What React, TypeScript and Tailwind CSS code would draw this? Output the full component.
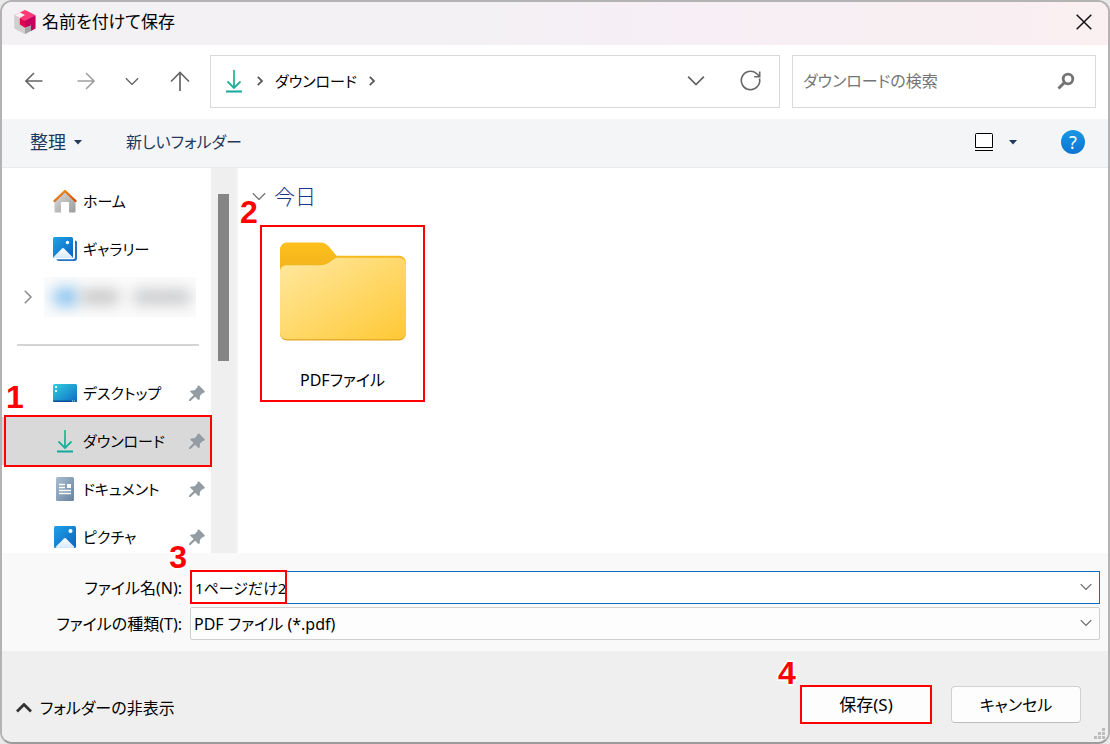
import { useState } from 'react';
import type { ReactNode } from 'react';

interface SidebarItemProps {
  icon: ReactNode;
  label: string;
  pinned?: boolean;
  selected?: boolean;
}

function AppLogo() {
  return (
    <svg width="22" height="24" viewBox="0 0 22 24" aria-hidden="true">
      <path d="M11 0 21.5 5.3V18.6L11 24 .5 18.6V5.3Z" fill="#cfcfcf" />
      <path d="M.5 5.3 11 10.5V24L.5 18.6Z" fill="#cdd0cf" />
      <path d="M11 0 21.5 5.3 11 10.6.5 5.3Z" fill="#ff3a74" />
      <path d="M.5 5.3 6 2.5 11 5 5.8 8Z" fill="#f4f4f4" />
      <path d="M21.5 5.3V18.6L17 21V15.4L11 17.8V10.6Z" fill="#c4005c" />
      <path d="M5.8 8 11 10.6V17.8L5.8 14.6Z" fill="#e5004a" />
      <path d="M11 17.8 17 15.4V21L11 24Z" fill="#a3a3a3" />
    </svg>
  );
}

function DownloadIcon() {
  return (
    <svg width="18" height="24" viewBox="0 0 18 24" fill="none" aria-hidden="true">
      <defs>
        <linearGradient id="dl" x1="0" y1="0" x2="0" y2="24" gradientUnits="userSpaceOnUse">
          <stop stopColor="#2fc08a" />
          <stop offset="1" stopColor="#13a8a0" />
        </linearGradient>
      </defs>
      <path d="M9 1v18M2.5 12.5 9 19l6.500-6.500M1 22.500h16" stroke="url(#dl)" strokeWidth="1.800" />
    </svg>
  );
}

function HomeIcon() {
  return (
    <svg width="24" height="24" viewBox="0 0 24 24" aria-hidden="true">
      <defs>
        <linearGradient id="wall" x1="0" y1="0" x2="1" y2="1">
          <stop stopColor="#dedede" />
          <stop offset="1" stopColor="#9b9b9b" />
        </linearGradient>
        <linearGradient id="roof" x1="0" y1="0" x2="1" y2="1">
          <stop stopColor="#f09a1a" />
          <stop offset="1" stopColor="#d8480c" />
        </linearGradient>
      </defs>
      <path d="M1.500 11 12 2l10.500 9v11.500a1 1 0 0 1-1 1H16V14a1 1 0 0 0-1-1H9a1 1 0 0 0-1 1v9.500H2.500a1 1 0 0 1-1-1Z" fill="url(#wall)" />
      <path d="M1.500 12 12 2l10.500 10" fill="none" stroke="url(#roof)" strokeWidth="2.400" strokeLinecap="round" strokeLinejoin="round" />
    </svg>
  );
}

function PictureIcon({ stacked = false }: { stacked?: boolean }) {
  return (
    <svg width="24" height="24" viewBox="0 0 24 24" aria-hidden="true">
      <defs>
        <linearGradient id="sky" x1="0" y1="0" x2="1" y2="1">
          <stop stopColor="#1fa2e8" />
          <stop offset="1" stopColor="#0b62bd" />
        </linearGradient>
        <linearGradient id="hill" x1="0" y1="0" x2="0" y2="1">
          <stop stopColor="#ffffff" />
          <stop offset="1" stopColor="#d5e9fa" />
        </linearGradient>
      </defs>
      {stacked ? (
        <>
          <path d="M22 3.500c1.300 0 2 .7 2 2v16c0 1.500-1 2.500-2.500 2.500H6c-1.500 0-2.500-.7-2.500-1.700H20c1.200 0 2-.8 2-2Z" fill="#2273c4" />
          <rect width="20" height="21" rx="1.500" fill="url(#sky)" />
          <path d="m.5 20 8.600-8.500a1.300 1.300 0 0 1 1.800 0L19.500 20a2 2 0 0 1-1 1h-17a2 2 0 0 1-1-1Z" fill="url(#hill)" />
          <circle cx="14.500" cy="5.500" r="1.700" fill="#fff" />
        </>
      ) : (
        <>
          <rect x="1" y="1" width="22" height="22" rx="1.500" fill="url(#sky)" />
          <path d="m2.500 22 8.600-8.500a1.300 1.300 0 0 1 1.800 0l8.600 8.500a2 2 0 0 1-1 1h-17a2 2 0 0 1-1-1Z" fill="url(#hill)" />
          <circle cx="17.500" cy="6" r="2" fill="#fff" />
        </>
      )}
    </svg>
  );
}

function DesktopIcon() {
  return (
    <svg width="24" height="20" viewBox="0 0 24 20" aria-hidden="true">
      <defs>
        <linearGradient id="desk" x1="0" y1="0" x2="1" y2="1">
          <stop stopColor="#33cfe0" />
          <stop offset="1" stopColor="#0b6cc4" />
        </linearGradient>
      </defs>
      <rect y="1" width="24" height="18" rx="1.500" fill="url(#desk)" />
      <path d="M0 17.500h24a1.500 1.500 0 0 1-1.500 1.500h-21A1.500 1.500 0 0 1 0 17.500Z" fill="#0a4f93" />
      <path d="M2 3h2v2H2zM2 7h2v2H2zM19 17.500h1v1h-1zM21 17.500h1v1h-1z" fill="#e8fbff" />
    </svg>
  );
}

function DocumentIcon() {
  return (
    <svg width="18" height="24" viewBox="0 0 18 24" aria-hidden="true">
      <defs>
        <linearGradient id="doc" x1="0" y1="0" x2="1" y2="1">
          <stop stopColor="#a9bdd0" />
          <stop offset="1" stopColor="#66839f" />
        </linearGradient>
      </defs>
      <rect width="18" height="24" rx="1.500" fill="url(#doc)" />
      <path d="M3 7.500h6M3 10.500h6M3 13.500h12M3 16.500h12" stroke="#fff" strokeWidth="1.300" />
      <path d="M11 7h4v4h-4z" fill="#fff" />
    </svg>
  );
}

function PinIcon() {
  return (
    <svg width="16" height="16" viewBox="0 0 16 16" className="text-[#949ca3]" aria-hidden="true">
      <path
        d="M8.800.8c.5-.5 1-.5 1.500 0l5.200 5.200c.5.500.4 1.100-.1 1.400l-2 .9-2.500 2.500-.1 3.200-1.100 1.200-3.600-3.500L1.500 16 0 15.900l.1-1.300 4.500-4.500L1 6.600l1.100-1.100 3.500-.2L8 2.800Z"
        fill="currentColor"
      />
    </svg>
  );
}

function Chevron({ className, thick = false }: { className: string; thick?: boolean }) {
  return (
    <svg className={className} viewBox="0 0 16 10" fill="none" stroke="currentColor" strokeWidth={thick ? 2.8 : 1.6} aria-hidden="true">
      <path d="m1 1.500 7 7 7-7" />
    </svg>
  );
}

function CrumbArrow() {
  return (
    <svg width="6" height="10" viewBox="0 0 6 10" fill="none" stroke="#5a5a5a" strokeWidth="1.800" aria-hidden="true">
      <path d="m.8.800 4.200 4.200-4.200 4.200" />
    </svg>
  );
}

function FolderIcon() {
  return (
    <svg width="126" height="100" viewBox="0 0 127 100" aria-hidden="true">
      <defs>
        <linearGradient id="front" x1="0" y1="0" x2="1" y2="1">
          <stop stopColor="#ffe8a0" />
          <stop offset="1" stopColor="#ffc935" />
        </linearGradient>
        <linearGradient id="back" x1="0" y1="0" x2="0" y2="1">
          <stop stopColor="#fdc01c" />
          <stop offset=".35" stopColor="#eeb01c" />
          <stop offset="1" stopColor="#e3a21f" />
        </linearGradient>
      </defs>
      <path d="M0 7a7 7 0 0 1 7-7h33c4 0 6 1 9 4l8 9.500h63a7 7 0 0 1 7 7V92a7 7 0 0 1-7 7H7a7 7 0 0 1-7-7Z" fill="url(#back)" />
      <path d="M0 29a6 6 0 0 1 6-6h34c4 0 7-1 10-3l4-3c2-1.300 3-1.600 5-1.600h61a7 7 0 0 1 7 7V91a6.500 6.500 0 0 1-7 6.500H7A6.500 6.500 0 0 1 0 91Z" fill="url(#front)" />
    </svg>
  );
}

function StepBadge({ n, className }: { n: number; className: string }) {
  return (
    <span
      className={`pointer-events-none absolute z-10 font-['Liberation_Sans',sans-serif] text-[32px] leading-8 font-bold text-[#ff0000] [paint-order:stroke] [-webkit-text-stroke:3px_white] ${className}`}
    >
      {n}
    </span>
  );
}

function SidebarItem({ icon, label, pinned, selected }: SidebarItemProps) {
  return (
    <li className={selected ? 'bg-[#d9d9d9]' : ''}>
      <button className="flex h-12 w-full items-center pr-1.5 pl-[51px] text-left text-[15px]">
        <span className="flex w-6 shrink-0 justify-center">{icon}</span>
        <span className="ml-1.5 flex-1 whitespace-nowrap">{label}</span>
        {pinned && <PinIcon />}
      </button>
    </li>
  );
}

export default function App() {
  const [fileName, setFileName] = useState('1ページだけ2');
  const [query, setQuery] = useState('');

  return (
    <div className="h-screen min-h-[640px] bg-[#e9e9e9]">
      <div className="flex h-full flex-col overflow-hidden rounded-xl border-2 border-[#b3b3b3] border-b-[#9c9c9c] bg-white font-['Noto_Sans','Noto_Sans_CJK_JP',sans-serif] text-base leading-6 text-black [font-feature-settings:'palt']">
        <header className="flex h-[43px] shrink-0 items-center justify-between bg-linear-to-r from-[#f3f1f4] from-40% via-[#f6eff5] via-60% to-[#faeff1] pr-3 pb-1 pl-3">
          <div className="flex items-center gap-1.5">
            <AppLogo />
            <h1 className="text-[17px] leading-6">名前を付けて保存</h1>
          </div>
          <button aria-label="閉じる" className="p-1">
            <svg width="16" height="16" viewBox="0 0 16 16" stroke="#111" strokeWidth="1.500" aria-hidden="true">
              <path d="m.7.700 14.600 14.600M15.300.7.700 15.300" />
            </svg>
          </button>
        </header>

        <nav className="flex h-[74px] shrink-0 items-center pr-3 pb-0.5 pl-1.5 text-[#666]">
          <button aria-label="戻る" className="flex h-10 w-13 items-center justify-center">
            <svg width="18" height="18" viewBox="0 0 18 18" fill="none" stroke="currentColor" strokeWidth="1.600" aria-hidden="true">
              <path d="M17.500 9H1M9 1 1 9l8 8" />
            </svg>
          </button>
          <button aria-label="進む" className="flex h-10 w-13 items-center justify-center text-[#a0a0a0]">
            <svg width="18" height="18" viewBox="0 0 18 18" fill="none" stroke="currentColor" strokeWidth="1.600" aria-hidden="true">
              <path d="M.5 9H17M9 1l8 8-8 8" />
            </svg>
          </button>
          <button aria-label="最近表示した場所" className="flex h-10 w-10 items-center justify-center">
            <Chevron className="w-3.5" />
          </button>
          <button aria-label="上へ" className="flex h-10 w-14 items-center justify-center">
            <svg width="20" height="20" viewBox="0 0 20 20" fill="none" stroke="currentColor" strokeWidth="1.700" aria-hidden="true">
              <path d="M10 20V1.500M1 10.500l9-9 9 9" />
            </svg>
          </button>
          <div className="ml-0.5 flex h-[53px] flex-1 items-center border border-[#d9d9d9] pr-4 pl-3.5">
            <DownloadIcon />
            <span className="ml-3.5">
              <CrumbArrow />
            </span>
            <a href="#downloads" className="mx-3 text-[15px] leading-6 whitespace-nowrap text-black">ダウンロード</a>
            <CrumbArrow />
            <button aria-label="以前の場所" className="mr-7.5 ml-auto p-1">
              <Chevron className="w-[18px]" />
            </button>
            <button aria-label="最新の情報に更新">
              <svg width="24" height="24" viewBox="0 0 24 24" fill="none" stroke="currentColor" strokeWidth="1.600" aria-hidden="true">
                <path d="M20.500 9.500a9.200 9.200 0 1 1-3-5l3.200 3M20.700 2.500v5.200h-5.500" />
              </svg>
            </button>
          </div>
          <div className="ml-3 flex h-[53px] w-76 items-center border border-[#d9d9d9] pr-5 pl-2.5">
            <input
              aria-label="ダウンロードの検索"
              placeholder="ダウンロードの検索"
              value={query}
              onChange={(e) => setQuery(e.target.value)}
              className="min-w-0 flex-1 outline-none placeholder:text-[#757575]"
            />
            <svg width="18" height="18" viewBox="0 0 18 18" fill="none" stroke="#737373" aria-hidden="true">
              <circle cx="11" cy="7" r="4.800" strokeWidth="2.800" />
              <path d="M7.500 10.500 1.500 16.500" strokeWidth="3" />
            </svg>
          </div>
        </nav>

        <div className="flex h-[49px] shrink-0 items-center border-b border-[#e8eaeb] bg-[#f4f5f7] pr-[23px] pb-0.5 pl-7 text-[#1e395b]">
          <button className="flex items-center gap-2 text-lg leading-6">
            整理
            <svg width="8" height="5" viewBox="0 0 8 5" fill="currentColor" aria-hidden="true">
              <path d="M0 0h8L4 4.500Z" />
            </svg>
          </button>
          <button className="ml-11 whitespace-nowrap">新しいフォルダー</button>
          <button aria-label="表示方法の変更" className="mr-11 ml-auto flex items-center gap-4">
            <svg width="18" height="19" viewBox="0 0 18 19" stroke="#000" fill="#fff" aria-hidden="true">
              <path d="M.5 1.500a1 1 0 0 1 1-1h15a1 1 0 0 1 1 1v13H.5Z" />
              <path d="M0 17.500h18" />
            </svg>
            <svg width="8" height="5" viewBox="0 0 8 5" fill="currentColor" aria-hidden="true">
              <path d="M0 0h8L4 4.500Z" />
            </svg>
          </button>
          <button aria-label="ヘルプ" className="h-6 w-6 rounded-full bg-linear-to-b from-[#1b97e3] to-[#0c74d4] text-lg leading-6 text-white">
            ?
          </button>
        </div>

        <div className="relative flex min-h-0 flex-1">
          <div className="relative w-[209px] shrink-0">
            <div className="h-full overflow-hidden pt-[9px]">
              <ul>
                <SidebarItem icon={<HomeIcon />} label="ホーム" />
                <SidebarItem icon={<PictureIcon stacked />} label="ギャラリー" />
                <li className="flex h-12 items-center pl-[22px] text-[#888]">
                  <svg width="8" height="14" viewBox="0 0 8 14" fill="none" stroke="currentColor" strokeWidth="1.500" aria-hidden="true">
                    <path d="m.8.800 6.200 6.200-6.200 6.200" />
                  </svg>
                  <span className="ml-3 flex h-10 w-[152px] items-center overflow-hidden bg-[#fbfbfb] pl-2">
                    <span className="h-5 w-7 rounded-full bg-[#93c8f0] blur-[7px]" />
                    <span className="h-4 w-10 rounded-full bg-[#c9c9c9] blur-[7px]" />
                    <span className="ml-3 h-4 w-[60px] rounded-full bg-[#cccdd0] blur-[7px]" />
                  </span>
                </li>
              </ul>
              <div className="flex h-12 items-center pr-3 pl-[15px]">
                <hr className="w-full border-t-2 border-[#d5d5d5]" />
              </div>
              <ul>
                <SidebarItem icon={<DesktopIcon />} label="デスクトップ" pinned />
                <SidebarItem icon={<DownloadIcon />} label="ダウンロード" pinned selected />
                <SidebarItem icon={<DocumentIcon />} label="ドキュメント" pinned />
                <SidebarItem icon={<PictureIcon />} label="ピクチャ" pinned />
              </ul>
            </div>
            <div className="pointer-events-none absolute top-[247px] -right-px left-0.5 h-[52px] border-2 border-[#ff0000]" />
            <StepBadge n={1} className="top-[213px] left-1" />
            <StepBadge n={3} className="right-6 -bottom-5" />
          </div>
          <div className="w-[25px] shrink-0 bg-[#efefef] px-[7px] pt-[26px]">
            <div className="h-[167px] bg-[#858585]" />
          </div>
          <main className="flex-1 border-l-2 border-[#f3f4f6] pt-3.5 pl-3.5">
            <h2 className="flex items-center gap-2 text-[21px] leading-7 font-light text-[#1e3287]">
              <Chevron className="w-3.5 text-[#777]" />
              今日
            </h2>
            <div className="relative mt-[15px] ml-2 w-[165px]">
              <StepBadge n={2} className="-top-[29px] -left-5" />
              <button className="flex h-[177px] w-full flex-col items-center border-2 border-[#ff0000] pt-[15px]">
                <FolderIcon />
                <span className="mt-[26px]">PDFファイル</span>
              </button>
            </div>
          </main>
        </div>

        <div className="grid shrink-0 grid-cols-[180px_1fr] items-center gap-x-2 gap-y-[3px] bg-[#f9f9f9] pt-[18px] pr-2 pb-[11px]">
          <label htmlFor="file-name" className="text-right">ファイル名(N):</label>
          <div className="relative">
            <input
              id="file-name"
              value={fileName}
              onChange={(e) => setFileName(e.target.value)}
              className="block h-[33px] w-full border border-[#0a6fc2] bg-white pr-8 pl-1 text-[15px] outline-none"
            />
            <div className="pointer-events-none absolute -top-px left-0 h-[34px] w-[97px] border-2 border-[#ff0000]" />
            <Chevron className="pointer-events-none absolute top-3 right-2 w-3 text-[#666]" />
          </div>
          <label htmlFor="file-type" className="text-right">ファイルの種類(T):</label>
          <div className="relative">
            <select id="file-type" className="block h-[33px] w-full appearance-none rounded-xs border border-[#cfcfcf] bg-[#fdfdfd] pr-8 pl-[3px]">
              <option>PDF ファイル (*.pdf)</option>
            </select>
            <Chevron className="pointer-events-none absolute top-3 right-2 w-3 text-[#666]" />
          </div>
        </div>

        <footer className="relative flex h-[91px] shrink-0 items-center bg-[#efefef] pt-4 pr-[27px] pl-3.5">
          <button className="mt-1.5 flex items-center gap-2 whitespace-nowrap">
            <Chevron className="w-4 rotate-180 text-[#333]" thick />
            フォルダーの非表示
          </button>
          <div className="relative ml-auto">
            <StepBadge n={4} className="-top-7 -left-[22px]" />
            <button className="h-[39px] w-33 border-2 border-[#ff0000] bg-[#fdfdfd] text-[17px]">保存(S)</button>
          </div>
          <button className="ml-[19px] h-[37px] w-[130px] rounded border border-[#d0d0d0] border-b-[#bcbcbc] bg-[#fdfdfd]">
            キャンセル
          </button>
          <svg width="12" height="12" viewBox="0 0 12 12" fill="#bdbdbd" className="absolute right-0.5 bottom-0.5" aria-hidden="true">
            <path d="M8 0h3v3H8zM4 4h3v3H4zM8 4h3v3H8zM0 8h3v3H0zM4 8h3v3H4zM8 8h3v3H8z" />
          </svg>
        </footer>
      </div>
    </div>
  );
}
